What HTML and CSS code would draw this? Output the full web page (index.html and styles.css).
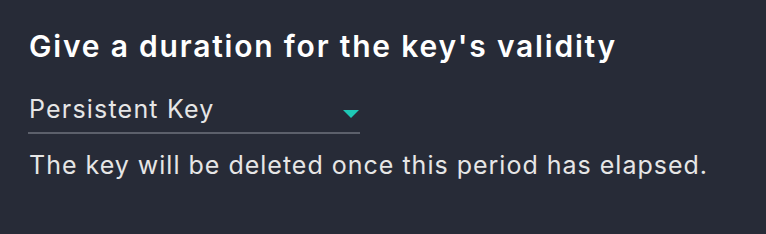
FILE: index.html
```html
<!DOCTYPE html>
<html lang="en">
<head>
    <meta charset="utf-8">
    <title>Key validity</title>
    <link rel="stylesheet" href="styles.css">
</head>
<body>
    <div class="validity-panel">
        <h2 class="validity-title">Give a duration for the key's validity</h2>
        <div class="validity-select">
            <span class="validity-value">Persistent Key</span>
            <span class="validity-arrow"></span>
        </div>
        <p class="validity-help">The key will be deleted once this period has elapsed.</p>
    </div>
</body>
</html>
```

FILE: styles.css
```css
html, body {
    margin: 0;
    background-color: #272b37;
    font-family: Inter, "Noto Sans", sans-serif;
}

.validity-panel {
    padding: 28px 29px;
}

.validity-title {
    margin: 0 0 26px;
    color: #ffffff;
    font-size: 30px;
    font-weight: 600;
    line-height: 36px;
    letter-spacing: 1.8px;
}

.validity-select {
    display: flex;
    align-items: center;
    justify-content: space-between;
    width: 332px;
    height: 44px;
    margin-left: -1px;
    padding-left: 1px;
    padding-bottom: 4px;
    border-bottom: 2px solid #5c606b;
    box-sizing: border-box;
}

.validity-value {
    color: #e6e6e6;
    font-size: 25px;
    line-height: 30px;
    letter-spacing: 1.2px;
}

.validity-arrow {
    width: 0;
    height: 0;
    margin-top: 10px;
    margin-right: 1px;
    border-left: 8px solid transparent;
    border-right: 8px solid transparent;
    border-top: 8px solid #1ec8b5;
}

.validity-help {
    margin: 16px 0 0;
    color: #e6e6e6;
    font-size: 25px;
    line-height: 30px;
    letter-spacing: 1px;
}
```
